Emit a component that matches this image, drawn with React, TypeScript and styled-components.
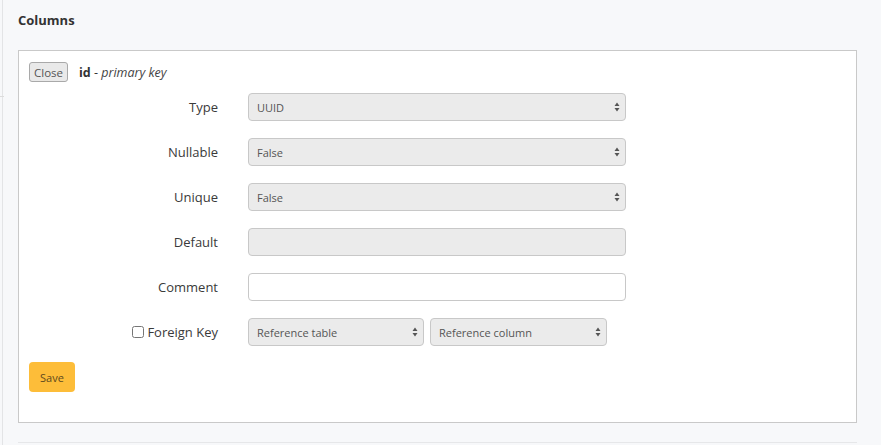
import React from 'react';
import styled, { createGlobalStyle } from 'styled-components';

const GlobalStyle = createGlobalStyle`
	html, body {
		margin: 0;
		padding: 0;
		background: #f7f8fa;
		font-family: 'Open Sans', 'Liberation Sans', sans-serif;
		color: #333;
	}
`;

// 화면 전체
const Page = styled.div`
	position: relative;
	margin-left: 2px;
	min-height: 445px;
	border-left: 1px solid #e3e4e6;
	background: #f7f8fa;
	box-sizing: border-box;
	padding: 11px 24px 0 15px;
`;

const Stub = styled.div`
	position: absolute;
	left: -3px;
	top: 96px;
	width: 4px;
	height: 1px;
	background: #dcdcdc;
`;

const Title = styled.h3`
	margin: 0 0 20px;
	font-size: 13px;
	font-weight: 700;
	line-height: 19px;
	color: #333;
`;

const Panel = styled.div`
	width: 839px;
	box-sizing: border-box;
	background: #fff;
	border: 1px solid #c9c9c9;
	padding: 11px 10px 30px;
`;

const PanelHeader = styled.div`
	display: flex;
	align-items: center;
	gap: 11px;
	height: 20px;
	margin-bottom: 11px;
`;

const CloseButton = styled.button`
	height: 20px;
	padding: 0 4px;
	font-family: inherit;
	font-size: 11.5px;
	color: #555;
	background: #e9e9e9;
	border: 1px solid #a9a9a9;
	border-radius: 3px;
`;

const ColumnName = styled.span`
	font-size: 12.5px;
	color: #333;
	b {
		font-weight: 700;
	}
	i {
		color: #444;
	}
`;

const Form = styled.div`
	display: flex;
	flex-direction: column;
	gap: 17px;
`;

const Row = styled.div`
	display: grid;
	grid-template-columns: 189px 1fr;
	column-gap: 30px;
	align-items: center;
	height: 28px;
`;

const Label = styled.label`
	display: flex;
	align-items: center;
	justify-content: flex-end;
	gap: 3px;
	font-size: 13px;
	color: #3a3a3a;
`;

const CheckBox = styled.input`
	margin: 0;
	width: 12px;
	height: 12px;
`;

const Controls = styled.div`
	display: flex;
	gap: 6px;
`;

const SelectWrap = styled.div<{ w: number }>`
	position: relative;
	width: ${(p) => p.w}px;
	height: 28px;
`;

const Select = styled.select`
	appearance: none;
	width: 100%;
	height: 100%;
	box-sizing: border-box;
	padding: 0 20px 0 8px;
	font-family: inherit;
	font-size: 11px;
	color: #555;
	background: #ebebeb;
	border: 1px solid #c8c8c8;
	border-radius: 4px;
`;

const Arrow = styled.svg`
	position: absolute;
	right: 6px;
	top: 9px;
	pointer-events: none;
`;

const TextInput = styled.input<{ disabled?: boolean }>`
	width: 378px;
	height: 28px;
	box-sizing: border-box;
	padding: 0 8px;
	font-family: inherit;
	font-size: 11px;
	background: ${(p) => (p.disabled ? '#ebebeb' : '#fff')};
	border: 1px solid #c8c8c8;
	border-radius: 4px;
`;

const SaveButton = styled.button`
	margin-top: 16px;
	width: 46px;
	height: 30px;
	font-family: inherit;
	font-size: 11px;
	color: #5e4a1e;
	background: #fdbd39;
	border: none;
	border-radius: 4px;
`;

const BottomLine = styled.div`
	position: absolute;
	left: 15px;
	top: 442px;
	width: 839px;
	height: 1px;
	background: #e6e7e9;
`;

function UpDown() {
	return (
		<Arrow width='6' height='10' viewBox='0 0 6 10'>
			<path d='M3 0.5 L5.5 4 H0.5 Z M3 9.5 L5.5 6 H0.5 Z' fill='#555' />
		</Arrow>
	);
}

function SelectBox({ value, w = 378 }: { value: string; w?: number }) {
	return (
		<SelectWrap w={w}>
			<Select defaultValue={value}>
				<option>{value}</option>
			</Select>
			<UpDown />
		</SelectWrap>
	);
}

function App() {
	return (
		<>
			<GlobalStyle />
			<Page>
				<Stub />
				<Title>Columns</Title>
				<Panel>
					<PanelHeader>
						<CloseButton>Close</CloseButton>
						<ColumnName>
							<b>id</b> - <i>primary key</i>
						</ColumnName>
					</PanelHeader>
					<Form>
						<Row>
							<Label>Type</Label>
							<SelectBox value='UUID' />
						</Row>
						<Row>
							<Label>Nullable</Label>
							<SelectBox value='False' />
						</Row>
						<Row>
							<Label>Unique</Label>
							<SelectBox value='False' />
						</Row>
						<Row>
							<Label>Default</Label>
							<TextInput disabled />
						</Row>
						<Row>
							<Label>Comment</Label>
							<TextInput />
						</Row>
						<Row>
							<Label>
								<CheckBox type='checkbox' />
								Foreign Key
							</Label>
							<Controls>
								<SelectBox value='Reference table' w={176} />
								<SelectBox value='Reference column' w={177} />
							</Controls>
						</Row>
					</Form>
					<SaveButton>Save</SaveButton>
				</Panel>
				<BottomLine />
			</Page>
		</>
	);
}

export default App;
